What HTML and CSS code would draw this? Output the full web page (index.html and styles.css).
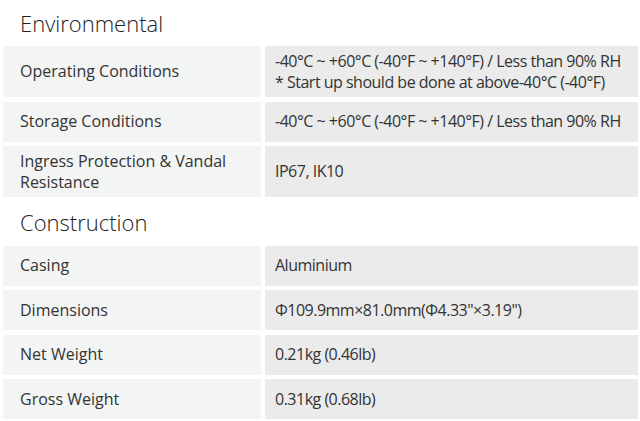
FILE: index.html
```html
<!DOCTYPE html>
<html>
<head>
<meta charset="utf-8">
<link rel="stylesheet" href="styles.css">
</head>
<body>
<div class="spec">
  <h2 class="heading">Environmental</h2>
  <div class="label">Operating Conditions</div>
  <div class="value">-40°C ~ +60°C (-40°F ~ +140°F) / Less than 90% RH<br>* Start up should be done at above-40°C (-40°F)</div>
  <div class="label">Storage Conditions</div>
  <div class="value">-40°C ~ +60°C (-40°F ~ +140°F) / Less than 90% RH</div>
  <div class="label">Ingress Protection &amp; Vandal Resistance</div>
  <div class="value">IP67, IK10</div>
  <h2 class="heading second">Construction</h2>
  <div class="label">Casing</div>
  <div class="value">Aluminium</div>
  <div class="label">Dimensions</div>
  <div class="value">Φ109.9mm×81.0mm(Φ4.33"×3.19")</div>
  <div class="label">Net Weight</div>
  <div class="value">0.21kg (0.46lb)</div>
  <div class="label">Gross Weight</div>
  <div class="value">0.31kg (0.68lb)</div>
</div>
</body>
</html>
```
FILE: styles.css
```css
html, body {
  margin: 0;
  padding: 0;
  background: #ffffff;
}
body {
  font-family: "Open Sans", Lato, sans-serif;
  color: #333333;
}
.spec {
  display: grid;
  grid-template-columns: 258px 373px;
  column-gap: 4px;
  row-gap: 4.4px;
  margin-left: 3px;
}
.heading {
  grid-column: 1 / -1;
  margin: 0;
  height: 42px;
  padding-left: 17px;
  font-size: 22px;
  font-weight: 300;
  line-height: 46px;
  color: #222222;
}
.heading.second {
  height: 40px;
  line-height: 40px;
}
.label, .value {
  display: flex;
  align-items: center;
  min-height: 40px;
  box-sizing: border-box;
  padding: 4.5px 17px;
  font-size: 16px;
  line-height: 21px;
}
.label {
  background: #f3f4f4;
  letter-spacing: 0;
}
.value {
  background: #ebebeb;
  padding-left: 10px;
  padding-right: 4px;
  white-space: nowrap;
  letter-spacing: -0.5px;
}
```
